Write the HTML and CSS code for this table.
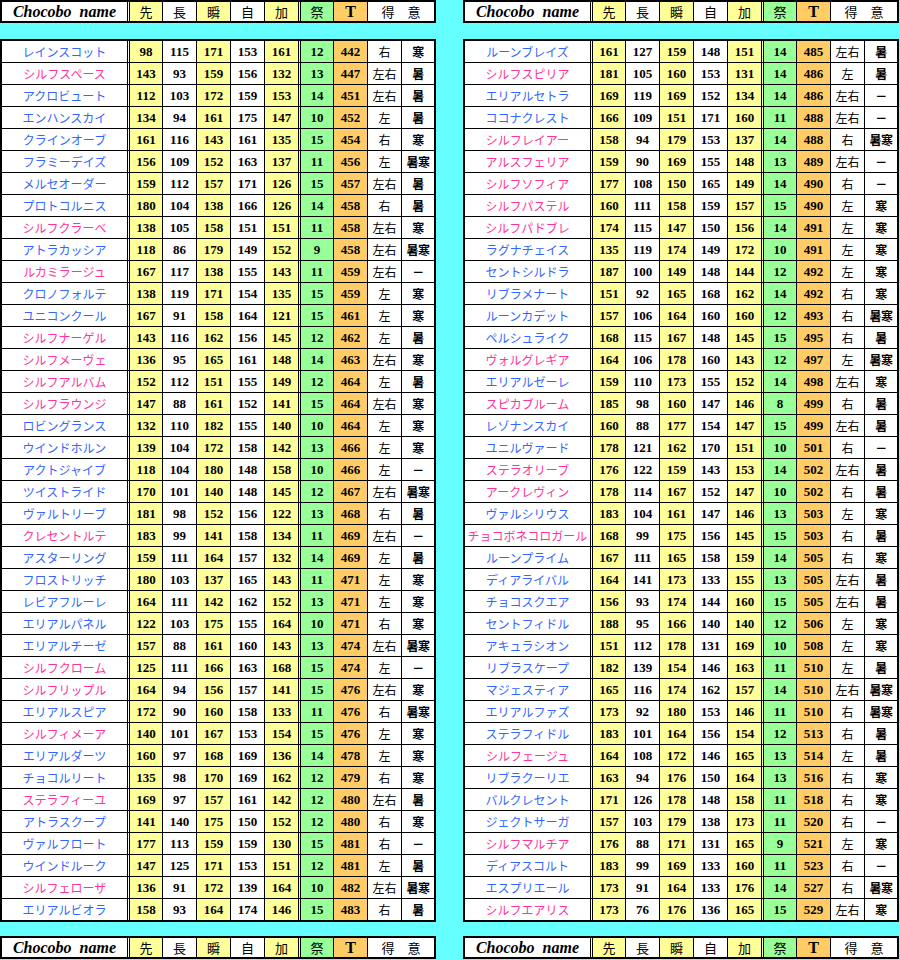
FILE: index.html
```html
<!DOCTYPE html>
<html lang="ja">
<head>
<meta charset="utf-8">
<title>Chocobo</title>
<link rel="stylesheet" href="styles.css">
</head>
<body>
<div class="page">
  <div class="col">
    <table class="hdr">
      <colgroup><col class="w c-nm"><col class="y c-n1"><col class="w c-n2"><col class="y c-n3"><col class="w c-n4"><col class="y c-n5"><col class="g c-n6"><col class="o c-n7"><col class="w c-n8"><col class="w c-n9"></colgroup>
      <tr><th class="hn">Chocobo&nbsp; name</th><th>先</th><th>長</th><th>瞬</th><th>自</th><th>加</th><th>祭</th><th class="ht">T</th><th colspan="2">得　意</th></tr>
    </table>
    <table class="data">
      <colgroup><col class="w c-nm"><col class="y c-n1"><col class="w c-n2"><col class="y c-n3"><col class="w c-n4"><col class="y c-n5"><col class="g c-n6"><col class="o c-n7"><col class="w c-n8"><col class="w c-n9"></colgroup>
      <tr><td class="b">レインスコット</td><td>98</td><td>115</td><td>171</td><td>153</td><td>161</td><td>12</td><td>442</td><td>右</td><td>寒</td></tr>
      <tr><td class="p">シルフスペース</td><td>143</td><td>93</td><td>159</td><td>156</td><td>132</td><td>13</td><td>447</td><td>左右</td><td>暑</td></tr>
      <tr><td class="b">アクロビュート</td><td>112</td><td>103</td><td>172</td><td>159</td><td>153</td><td>14</td><td>451</td><td>左右</td><td>暑</td></tr>
      <tr><td class="b">エンハンスカイ</td><td>134</td><td>94</td><td>161</td><td>175</td><td>147</td><td>10</td><td>452</td><td>左</td><td>暑</td></tr>
      <tr><td class="b">クラインオーブ</td><td>161</td><td>116</td><td>143</td><td>161</td><td>135</td><td>15</td><td>454</td><td>右</td><td>寒</td></tr>
      <tr><td class="b">フラミーデイズ</td><td>156</td><td>109</td><td>152</td><td>163</td><td>137</td><td>11</td><td>456</td><td>左</td><td>暑寒</td></tr>
      <tr><td class="b">メルセオーダー</td><td>159</td><td>112</td><td>157</td><td>171</td><td>126</td><td>15</td><td>457</td><td>左右</td><td>暑</td></tr>
      <tr><td class="b">プロトコルニス</td><td>180</td><td>104</td><td>138</td><td>166</td><td>126</td><td>14</td><td>458</td><td>右</td><td>暑</td></tr>
      <tr><td class="p">シルフクラーベ</td><td>138</td><td>105</td><td>158</td><td>151</td><td>151</td><td>11</td><td>458</td><td>左右</td><td>寒</td></tr>
      <tr><td class="b">アトラカッシア</td><td>118</td><td>86</td><td>179</td><td>149</td><td>152</td><td>9</td><td>458</td><td>左右</td><td>暑寒</td></tr>
      <tr><td class="p">ルカミラージュ</td><td>167</td><td>117</td><td>138</td><td>155</td><td>143</td><td>11</td><td>459</td><td>左右</td><td>－</td></tr>
      <tr><td class="b">クロノフォルテ</td><td>138</td><td>119</td><td>171</td><td>154</td><td>135</td><td>15</td><td>459</td><td>左</td><td>寒</td></tr>
      <tr><td class="b">ユニコンクール</td><td>167</td><td>91</td><td>158</td><td>164</td><td>121</td><td>15</td><td>461</td><td>左</td><td>寒</td></tr>
      <tr><td class="p">シルフナーゲル</td><td>143</td><td>116</td><td>162</td><td>156</td><td>145</td><td>12</td><td>462</td><td>左</td><td>暑</td></tr>
      <tr><td class="p">シルフメーヴェ</td><td>136</td><td>95</td><td>165</td><td>161</td><td>148</td><td>14</td><td>463</td><td>左右</td><td>寒</td></tr>
      <tr><td class="p">シルフアルバム</td><td>152</td><td>112</td><td>151</td><td>155</td><td>149</td><td>12</td><td>464</td><td>左</td><td>暑</td></tr>
      <tr><td class="p">シルフラウンジ</td><td>147</td><td>88</td><td>161</td><td>152</td><td>141</td><td>15</td><td>464</td><td>左右</td><td>寒</td></tr>
      <tr><td class="b">ロビングランス</td><td>132</td><td>110</td><td>182</td><td>155</td><td>140</td><td>10</td><td>464</td><td>左</td><td>寒</td></tr>
      <tr><td class="b">ウインドホルン</td><td>139</td><td>104</td><td>172</td><td>158</td><td>142</td><td>13</td><td>466</td><td>左</td><td>寒</td></tr>
      <tr><td class="b">アクトジャイブ</td><td>118</td><td>104</td><td>180</td><td>148</td><td>158</td><td>10</td><td>466</td><td>左</td><td>－</td></tr>
      <tr><td class="b">ツイストライド</td><td>170</td><td>101</td><td>140</td><td>148</td><td>145</td><td>12</td><td>467</td><td>左右</td><td>暑寒</td></tr>
      <tr><td class="b">ヴァルトリーブ</td><td>181</td><td>98</td><td>152</td><td>156</td><td>122</td><td>13</td><td>468</td><td>右</td><td>暑</td></tr>
      <tr><td class="p">クレセントルテ</td><td>183</td><td>99</td><td>141</td><td>158</td><td>134</td><td>11</td><td>469</td><td>左右</td><td>－</td></tr>
      <tr><td class="b">アスターリング</td><td>159</td><td>111</td><td>164</td><td>157</td><td>132</td><td>14</td><td>469</td><td>左</td><td>暑</td></tr>
      <tr><td class="b">フロストリッチ</td><td>180</td><td>103</td><td>137</td><td>165</td><td>143</td><td>11</td><td>471</td><td>左</td><td>寒</td></tr>
      <tr><td class="b">レビアフルーレ</td><td>164</td><td>111</td><td>142</td><td>162</td><td>152</td><td>13</td><td>471</td><td>左</td><td>寒</td></tr>
      <tr><td class="b">エリアルパネル</td><td>122</td><td>103</td><td>175</td><td>155</td><td>164</td><td>10</td><td>471</td><td>右</td><td>寒</td></tr>
      <tr><td class="b">エリアルチーゼ</td><td>157</td><td>88</td><td>161</td><td>160</td><td>143</td><td>13</td><td>474</td><td>左右</td><td>暑寒</td></tr>
      <tr><td class="p">シルフクローム</td><td>125</td><td>111</td><td>166</td><td>163</td><td>168</td><td>15</td><td>474</td><td>左</td><td>－</td></tr>
      <tr><td class="p">シルフリップル</td><td>164</td><td>94</td><td>156</td><td>157</td><td>141</td><td>15</td><td>476</td><td>左右</td><td>寒</td></tr>
      <tr><td class="b">エリアルスピア</td><td>172</td><td>90</td><td>160</td><td>158</td><td>133</td><td>11</td><td>476</td><td>右</td><td>暑寒</td></tr>
      <tr><td class="p">シルフィメーア</td><td>140</td><td>101</td><td>167</td><td>153</td><td>154</td><td>15</td><td>476</td><td>左</td><td>寒</td></tr>
      <tr><td class="b">エリアルダーツ</td><td>160</td><td>97</td><td>168</td><td>169</td><td>136</td><td>14</td><td>478</td><td>左</td><td>寒</td></tr>
      <tr><td class="b">チョコルリート</td><td>135</td><td>98</td><td>170</td><td>169</td><td>162</td><td>12</td><td>479</td><td>右</td><td>寒</td></tr>
      <tr><td class="p">ステラフィーユ</td><td>169</td><td>97</td><td>157</td><td>161</td><td>142</td><td>12</td><td>480</td><td>左右</td><td>暑</td></tr>
      <tr><td class="b">アトラスクープ</td><td>141</td><td>140</td><td>175</td><td>150</td><td>152</td><td>12</td><td>480</td><td>右</td><td>寒</td></tr>
      <tr><td class="b">ヴァルフロート</td><td>177</td><td>113</td><td>159</td><td>159</td><td>130</td><td>15</td><td>481</td><td>右</td><td>－</td></tr>
      <tr><td class="b">ウインドルーク</td><td>147</td><td>125</td><td>171</td><td>153</td><td>151</td><td>12</td><td>481</td><td>左</td><td>暑</td></tr>
      <tr><td class="p">シルフェローザ</td><td>136</td><td>91</td><td>172</td><td>139</td><td>164</td><td>10</td><td>482</td><td>左右</td><td>暑寒</td></tr>
      <tr><td class="b">エリアルビオラ</td><td>158</td><td>93</td><td>164</td><td>174</td><td>146</td><td>15</td><td>483</td><td>右</td><td>暑</td></tr>
    </table>
    <table class="hdr hdr-next">
      <colgroup><col class="w c-nm"><col class="y c-n1"><col class="w c-n2"><col class="y c-n3"><col class="w c-n4"><col class="y c-n5"><col class="g c-n6"><col class="o c-n7"><col class="w c-n8"><col class="w c-n9"></colgroup>
      <tr><th class="hn">Chocobo&nbsp; name</th><th>先</th><th>長</th><th>瞬</th><th>自</th><th>加</th><th>祭</th><th class="ht">T</th><th colspan="2">得　意</th></tr>
    </table>
  </div>
  <div class="col">
    <table class="hdr">
      <colgroup><col class="w c-nm"><col class="y c-n1"><col class="w c-n2"><col class="y c-n3"><col class="w c-n4"><col class="y c-n5"><col class="g c-n6"><col class="o c-n7"><col class="w c-n8"><col class="w c-n9"></colgroup>
      <tr><th class="hn">Chocobo&nbsp; name</th><th>先</th><th>長</th><th>瞬</th><th>自</th><th>加</th><th>祭</th><th class="ht">T</th><th colspan="2">得　意</th></tr>
    </table>
    <table class="data">
      <colgroup><col class="w c-nm"><col class="y c-n1"><col class="w c-n2"><col class="y c-n3"><col class="w c-n4"><col class="y c-n5"><col class="g c-n6"><col class="o c-n7"><col class="w c-n8"><col class="w c-n9"></colgroup>
      <tr><td class="b">ルーンブレイズ</td><td>161</td><td>127</td><td>159</td><td>148</td><td>151</td><td>14</td><td>485</td><td>左右</td><td>暑</td></tr>
      <tr><td class="p">シルフスピリア</td><td>181</td><td>105</td><td>160</td><td>153</td><td>131</td><td>14</td><td>486</td><td>左</td><td>暑</td></tr>
      <tr><td class="b">エリアルセトラ</td><td>169</td><td>119</td><td>169</td><td>152</td><td>134</td><td>14</td><td>486</td><td>左右</td><td>－</td></tr>
      <tr><td class="b">ココナクレスト</td><td>166</td><td>109</td><td>151</td><td>171</td><td>160</td><td>11</td><td>488</td><td>左右</td><td>－</td></tr>
      <tr><td class="p">シルフレイアー</td><td>158</td><td>94</td><td>179</td><td>153</td><td>137</td><td>14</td><td>488</td><td>右</td><td>暑寒</td></tr>
      <tr><td class="p">アルスフェリア</td><td>159</td><td>90</td><td>169</td><td>155</td><td>148</td><td>13</td><td>489</td><td>左右</td><td>－</td></tr>
      <tr><td class="p">シルフソフィア</td><td>177</td><td>108</td><td>150</td><td>165</td><td>149</td><td>14</td><td>490</td><td>右</td><td>－</td></tr>
      <tr><td class="p">シルフパステル</td><td>160</td><td>111</td><td>158</td><td>159</td><td>157</td><td>15</td><td>490</td><td>左</td><td>寒</td></tr>
      <tr><td class="p">シルフパドブレ</td><td>174</td><td>115</td><td>147</td><td>150</td><td>156</td><td>14</td><td>491</td><td>左</td><td>寒</td></tr>
      <tr><td class="b">ラグナチェイス</td><td>135</td><td>119</td><td>174</td><td>149</td><td>172</td><td>10</td><td>491</td><td>左</td><td>寒</td></tr>
      <tr><td class="b">セントシルドラ</td><td>187</td><td>100</td><td>149</td><td>148</td><td>144</td><td>12</td><td>492</td><td>左</td><td>寒</td></tr>
      <tr><td class="b">リブラメナート</td><td>151</td><td>92</td><td>165</td><td>168</td><td>162</td><td>14</td><td>492</td><td>右</td><td>寒</td></tr>
      <tr><td class="b">ルーンカデット</td><td>157</td><td>106</td><td>164</td><td>160</td><td>160</td><td>12</td><td>493</td><td>右</td><td>暑寒</td></tr>
      <tr><td class="b">ペルシュライク</td><td>168</td><td>115</td><td>167</td><td>148</td><td>145</td><td>15</td><td>495</td><td>右</td><td>暑</td></tr>
      <tr><td class="p">ヴォルグレギア</td><td>164</td><td>106</td><td>178</td><td>160</td><td>143</td><td>12</td><td>497</td><td>左</td><td>暑寒</td></tr>
      <tr><td class="b">エリアルゼーレ</td><td>159</td><td>110</td><td>173</td><td>155</td><td>152</td><td>14</td><td>498</td><td>左右</td><td>寒</td></tr>
      <tr><td class="p">スピカブルーム</td><td>185</td><td>98</td><td>160</td><td>147</td><td>146</td><td>8</td><td>499</td><td>右</td><td>暑</td></tr>
      <tr><td class="b">レゾナンスカイ</td><td>160</td><td>88</td><td>177</td><td>154</td><td>147</td><td>15</td><td>499</td><td>左右</td><td>暑</td></tr>
      <tr><td class="b">ユニルヴァード</td><td>178</td><td>121</td><td>162</td><td>170</td><td>151</td><td>10</td><td>501</td><td>右</td><td>－</td></tr>
      <tr><td class="p">ステラオリーブ</td><td>176</td><td>122</td><td>159</td><td>143</td><td>153</td><td>14</td><td>502</td><td>左右</td><td>暑</td></tr>
      <tr><td class="p">アークレヴィン</td><td>178</td><td>114</td><td>167</td><td>152</td><td>147</td><td>10</td><td>502</td><td>右</td><td>暑</td></tr>
      <tr><td class="b">ヴァルシリウス</td><td>183</td><td>104</td><td>161</td><td>147</td><td>146</td><td>13</td><td>503</td><td>左</td><td>寒</td></tr>
      <tr><td class="p">チョコボネコロガール</td><td>168</td><td>99</td><td>175</td><td>156</td><td>145</td><td>15</td><td>503</td><td>右</td><td>暑</td></tr>
      <tr><td class="b">ルーンプライム</td><td>167</td><td>111</td><td>165</td><td>158</td><td>159</td><td>14</td><td>505</td><td>右</td><td>寒</td></tr>
      <tr><td class="b">ディアライバル</td><td>164</td><td>141</td><td>173</td><td>133</td><td>155</td><td>13</td><td>505</td><td>左右</td><td>暑</td></tr>
      <tr><td class="b">チョコスクエア</td><td>156</td><td>93</td><td>174</td><td>144</td><td>160</td><td>15</td><td>505</td><td>左右</td><td>暑</td></tr>
      <tr><td class="b">セントフィドル</td><td>188</td><td>95</td><td>166</td><td>140</td><td>140</td><td>12</td><td>506</td><td>左</td><td>寒</td></tr>
      <tr><td class="b">アキュラシオン</td><td>151</td><td>112</td><td>178</td><td>131</td><td>169</td><td>10</td><td>508</td><td>左</td><td>寒</td></tr>
      <tr><td class="b">リブラスケープ</td><td>182</td><td>139</td><td>154</td><td>146</td><td>163</td><td>11</td><td>510</td><td>左</td><td>暑</td></tr>
      <tr><td class="b">マジェスティア</td><td>165</td><td>116</td><td>174</td><td>162</td><td>157</td><td>14</td><td>510</td><td>左右</td><td>暑寒</td></tr>
      <tr><td class="b">エリアルファズ</td><td>173</td><td>92</td><td>180</td><td>153</td><td>146</td><td>11</td><td>510</td><td>右</td><td>暑寒</td></tr>
      <tr><td class="b">ステラフィドル</td><td>183</td><td>101</td><td>164</td><td>156</td><td>154</td><td>12</td><td>513</td><td>右</td><td>暑</td></tr>
      <tr><td class="p">シルフェージュ</td><td>164</td><td>108</td><td>172</td><td>146</td><td>165</td><td>13</td><td>514</td><td>左</td><td>暑</td></tr>
      <tr><td class="b">リブラクーリエ</td><td>163</td><td>94</td><td>176</td><td>150</td><td>164</td><td>13</td><td>516</td><td>右</td><td>寒</td></tr>
      <tr><td class="b">バルクレセント</td><td>171</td><td>126</td><td>178</td><td>148</td><td>158</td><td>11</td><td>518</td><td>右</td><td>寒</td></tr>
      <tr><td class="b">ジェクトサーガ</td><td>157</td><td>103</td><td>179</td><td>138</td><td>173</td><td>11</td><td>520</td><td>右</td><td>－</td></tr>
      <tr><td class="p">シルフマルチア</td><td>176</td><td>88</td><td>171</td><td>131</td><td>165</td><td>9</td><td>521</td><td>左</td><td>寒</td></tr>
      <tr><td class="b">ディアスコルト</td><td>183</td><td>99</td><td>169</td><td>133</td><td>160</td><td>11</td><td>523</td><td>右</td><td>－</td></tr>
      <tr><td class="b">エスプリエール</td><td>173</td><td>91</td><td>164</td><td>133</td><td>176</td><td>14</td><td>527</td><td>右</td><td>暑寒</td></tr>
      <tr><td class="p">シルフエアリス</td><td>173</td><td>76</td><td>176</td><td>136</td><td>165</td><td>15</td><td>529</td><td>左右</td><td>寒</td></tr>
    </table>
    <table class="hdr hdr-next">
      <colgroup><col class="w c-nm"><col class="y c-n1"><col class="w c-n2"><col class="y c-n3"><col class="w c-n4"><col class="y c-n5"><col class="g c-n6"><col class="o c-n7"><col class="w c-n8"><col class="w c-n9"></colgroup>
      <tr><th class="hn">Chocobo&nbsp; name</th><th>先</th><th>長</th><th>瞬</th><th>自</th><th>加</th><th>祭</th><th class="ht">T</th><th colspan="2">得　意</th></tr>
    </table>
  </div>
</div>
</body>
</html>
```
FILE: styles.css
```css
html, body {
  margin: 0;
  padding: 0;
  background: #66ffff;
}

.page {
  display: flex;
  align-items: flex-start;
  gap: 27px;
}

.col {
  display: flex;
  flex-direction: column;
  width: 436px;
  flex: none;
}

table {
  width: 436px;
  table-layout: fixed;
  border-collapse: separate;
  border-spacing: 0;
  border: 2px solid #000;
  background: #fff;
}

col.w { background: #ffffff; }
col.y { background: #ffff99; }
col.g { background: #99ff99; }
col.o { background: #ffcc66; }

col.c-nm { width: 128px; }
col.c-n1 { width: 33px; }
col.c-n2 { width: 34px; }
col.c-n3 { width: 34px; }
col.c-n4 { width: 34px; }
col.c-n5 { width: 36px; }
col.c-n6 { width: 33px; }
col.c-n7 { width: 34px; }
col.c-n8 { width: 34px; }
col.c-n9 { width: 32px; }

th, td {
  padding: 0;
  text-align: center;
  vertical-align: middle;
  white-space: nowrap;
  overflow: hidden;
  border-right: 1px solid #000;
  line-height: 16px;
  color: #000;
}

th:last-child, td:last-child {
  border-right: 0;
}

th:first-child, td:first-child,
th:nth-child(6), td:nth-child(6) {
  border-right: 3px double #000;
}

/* header tables */
.hdr tr {
  height: 19px;
}

.hdr th {
  font: 400 13px "Noto Sans CJK JP", sans-serif;
  line-height: 16px;
}

.hdr th.hn {
  font: italic 700 16px "Liberation Serif", serif;
  line-height: 16px;
  white-space: pre;
}

.hdr th.ht {
  font: 700 16px "Liberation Serif", serif;
  line-height: 16px;
}

.hdr-next {
  margin-top: 14px;
}

/* data tables */
.data {
  margin-top: 16px;
}

.data tr {
  height: 22px;
}

.data tr:last-child {
  height: 21px;
}

.data td {
  border-bottom: 1px solid #000;
  font: 700 13px "Liberation Serif", serif;
  line-height: 16px;
}

.data tr:last-child td {
  border-bottom: 0;
}

.data td.b,
.data td.p {
  font: 400 12px "Noto Sans CJK JP", sans-serif;
  line-height: 16px;
}

.data td.b { color: #3366ff; }
.data td.p { color: #ff3399; }

.data td:nth-child(9) {
  font: 400 12px "Noto Sans CJK JP", sans-serif;
  line-height: 16px;
}

.data td:nth-child(10) {
  font: 700 12px "Noto Sans CJK JP", sans-serif;
  line-height: 16px;
  letter-spacing: -0.5px;
}
```
